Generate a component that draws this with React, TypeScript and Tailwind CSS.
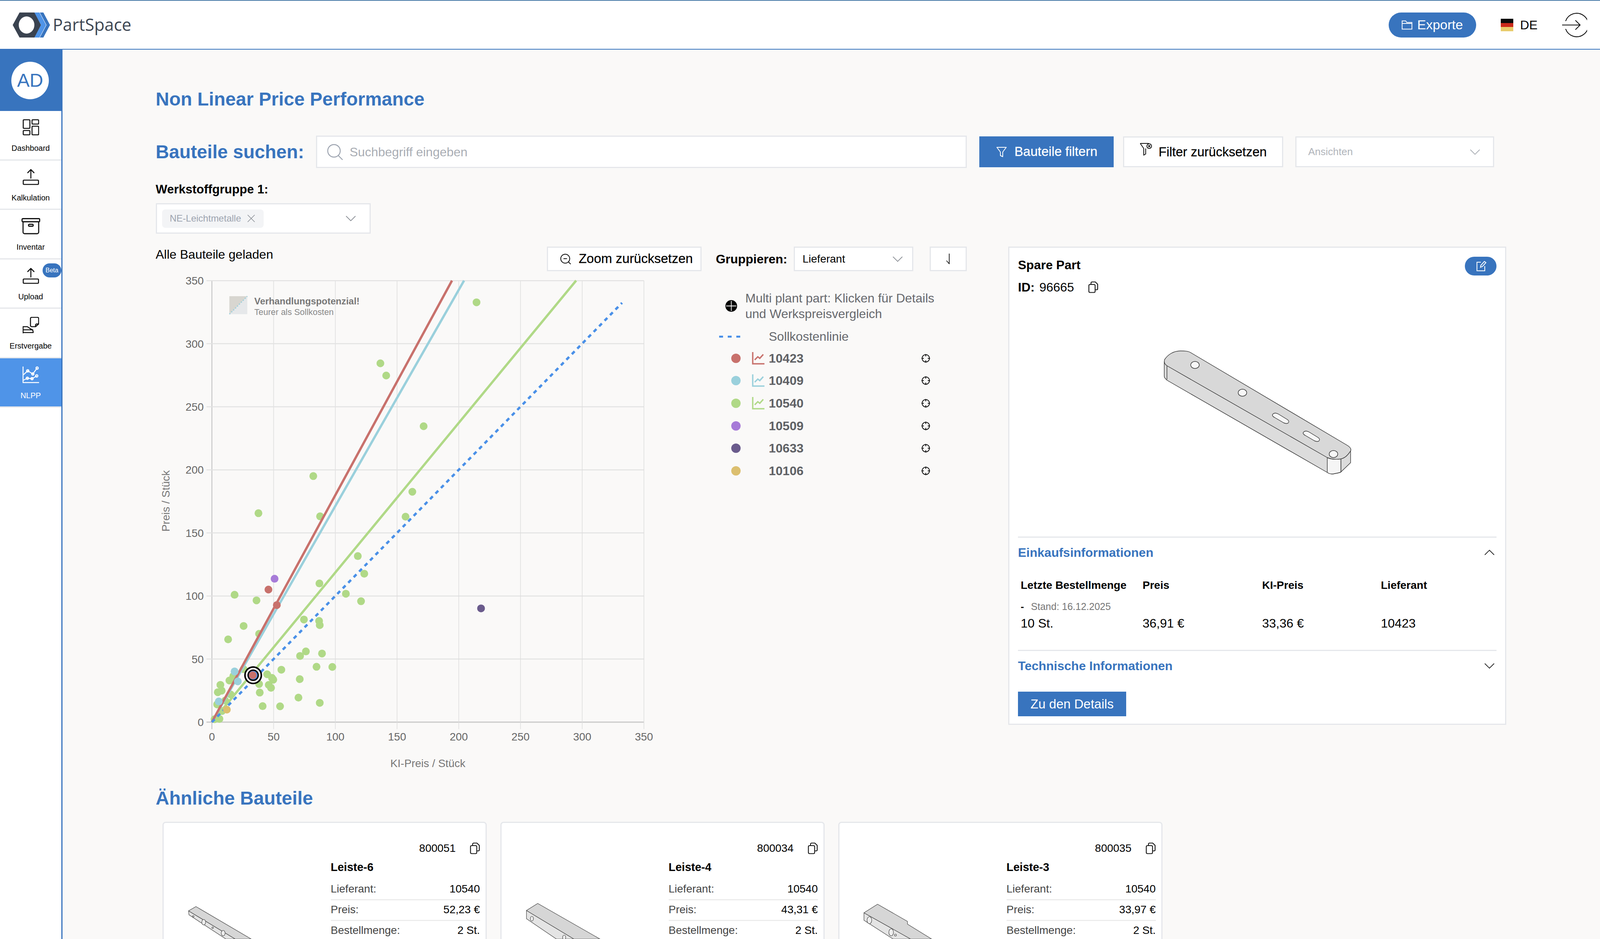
import { ReactNode } from "react";

// chart scale: 0..350 on both axes, in page pixels
const X0 = 544;
const Y0 = 1848;
const XSTEP = 158.6;
const YSTEP = 161.4;
const TICKS = [0, 1, 2, 3, 4, 5, 6, 7];

// scatter points measured off the picture
const ax = (x: number) => 400 + x * 0.829;
const ayTop = (y: number) => 680 + y * 0.446;
const ayLow = (y: number) => 1300 + y * 0.446;

const upperGreen = [
  [994, 210], [696, 560], [714, 630], [830, 921], [488, 1207], [795, 1297],
  [318, 1420], [509, 1438], [774, 1440],
];
const lowerGreen = [
  [626, 276], [646, 377], [507, 433], [244, 498], [312, 530], [589, 492], [636, 535],
  [272, 677], [459, 640], [506, 648], [508, 672], [320, 722], [224, 754], [465, 823],
  [447, 849], [515, 835], [498, 911], [547, 912], [389, 928], [345, 954], [360, 975],
  [364, 985], [228, 990], [200, 1015], [192, 1057], [204, 1048], [350, 1015], [357, 1032],
  [320, 1010], [446, 982], [322, 1059], [442, 1088], [508, 1118], [331, 1137], [385, 1138],
  [190, 1127], [232, 1070], [215, 1105], [182, 1212], [197, 1210], [240, 965], [272, 925],
  [205, 1165],
];
const others = [
  { c: "#9ad0dc", p: [[244, 938], [254, 995], [195, 1110]] },
  { c: "#dcbf6f", p: [[220, 1157]] },
  { c: "#c8716c", p: [[349, 468], [375, 557]] },
  { c: "#a77bd8", p: [[368, 406]] },
  { c: "#6a5b8c", p: [[1008, 576]] },
];

const legendRows = [
  { id: "10423", c: "#c8716c", line: true },
  { id: "10409", c: "#9ad0dc", line: true },
  { id: "10540", c: "#b0d987", line: true },
  { id: "10509", c: "#a77bd8", line: false },
  { id: "10633", c: "#6a5b8c", line: false },
  { id: "10106", c: "#dcbf6f", line: false },
];

function Chevron({ up = false, color = "#8b8f96" }: { up?: boolean; color?: string }) {
  return (
    <svg width="26" height="14" viewBox="0 0 26 14" fill="none" stroke={color} strokeWidth="1.8">
      <path d={up ? "M1 13 13 1 25 13" : "M1 1 13 13 25 1"} />
    </svg>
  );
}

function CopyIcon() {
  return (
    <svg width="26" height="30" viewBox="0 0 26 30" fill="none" stroke="#111" strokeWidth="2.2" strokeLinejoin="round">
      <rect x="1.5" y="8" width="16" height="20.5" rx="3" />
      <path d="M7 8V4a2.5 2.5 0 0 1 2.5-2.5H18l6 6V19a2.5 2.5 0 0 1-2.5 2.5h-4" />
    </svg>
  );
}

function NavItem({ label, icon, active, beta }: { label: string; icon: ReactNode; active?: boolean; beta?: boolean }) {
  return (
    <div
      className={`relative flex h-[126.5px] flex-col items-center border-b-3 border-[#e5e7eb] pt-[19px] ${
        active ? "bg-[#4f94e8] text-white" : "text-black"
      }`}
    >
      <div className="flex h-[46px] items-center justify-center">{icon}</div>
      <div className="mt-[17px] text-[20px] leading-[26px]">{label}</div>
      {beta && (
        <div className="absolute right-0 top-[10px] flex h-[36px] w-[48px] items-center justify-center rounded-full bg-[#3874be] text-[16px] text-white">
          Beta
        </div>
      )}
    </div>
  );
}

const UploadIcon = (
  <svg width="42" height="42" viewBox="0 0 42 42" fill="none" stroke="#111" strokeWidth="2.6" strokeLinecap="round" strokeLinejoin="round">
    <path d="M21 24V2M13 10l8-8 8 8" />
    <rect x="1.5" y="29" width="39" height="11" rx="2" />
  </svg>
);

function Sidebar() {
  return (
    <aside className="w-[160px] flex-none border-r-3 border-[#3874be] bg-white">
      <div className="flex h-[157px] items-center justify-center bg-[#3874be] pr-[3px]">
        <div className="flex h-[96px] w-[96px] items-center justify-center rounded-full bg-white text-[48px] text-[#3874be]">
          AD
        </div>
      </div>
      <NavItem
        label="Dashboard"
        icon={
          <svg width="42" height="42" viewBox="0 0 42 42" fill="none" stroke="#111" strokeWidth="2.6" strokeLinejoin="round">
            <rect x="1.5" y="1.5" width="17" height="22" rx="2" />
            <rect x="24" y="1.5" width="17" height="11" rx="2" />
            <rect x="1.5" y="29" width="17" height="11" rx="2" />
            <rect x="24" y="18" width="17" height="22" rx="2" />
          </svg>
        }
      />
      <NavItem label="Kalkulation" icon={UploadIcon} />
      <NavItem
        label="Inventar"
        icon={
          <svg width="48" height="42" viewBox="0 0 48 42" fill="none" stroke="#111" strokeWidth="2.8" strokeLinecap="round" strokeLinejoin="round">
            <rect x="1.5" y="1.5" width="45" height="8" rx="2" />
            <path d="M4 10v26a4 4 0 0 0 4 4h32a4 4 0 0 0 4-4V10" />
            <rect x="18" y="16" width="12" height="5" rx="2.5" />
          </svg>
        }
      />
      <NavItem label="Upload" beta icon={UploadIcon} />
      <NavItem
        label="Erstvergabe"
        icon={
          <svg width="42" height="42" viewBox="0 0 42 42" fill="none" stroke="#111" strokeWidth="2.6" strokeLinejoin="round">
            <path d="M20 4a3 3 0 0 1 3-3h15a3 3 0 0 1 3 3v14l-8 7H23a3 3 0 0 1-3-3z" />
            <path d="M41 18h-5a3 3 0 0 0-3 3v4" />
            <path d="M1 41V25h11l9 6c4 2 6 3 6 9H1zM1 33h26" />
          </svg>
        }
      />
      <NavItem
        label="NLPP"
        active
        icon={
          <svg width="44" height="44" viewBox="0 0 44 44" fill="none" stroke="#fff" strokeWidth="2.4">
            <path d="M2 1v41h41" />
            <path d="M3 22 14 12l13 8 11-15M3 36l10-5 12 1 12-7" />
            <circle cx="14" cy="12" r="3" />
            <circle cx="27" cy="20" r="3" />
            <circle cx="38" cy="5" r="3" />
            <circle cx="13" cy="31" r="3" />
            <circle cx="25" cy="32" r="3" />
            <circle cx="37" cy="25" r="3" />
          </svg>
        }
      />
    </aside>
  );
}

function Header() {
  return (
    <header className="flex h-[127px] flex-none items-center border-y-2 border-t-[#4a7ba8] border-b-[#3874be] bg-white pl-[32px] pr-[33px]">
      <svg width="100" height="66" viewBox="32 28 100 66">
        <path d="M32.500 61 50 29h39l16 32-16 32H50z" fill="#3a4350" />
        <ellipse cx="68" cy="61" rx="20" ry="22" fill="#fff" />
        <path d="M88 29h13l17 32-17 32H88l17-32z" fill="#4f94e8" />
        <path d="M102 29h9l17 32-17 32h-9l17-32z" fill="#3874be" />
      </svg>
      <div className="ml-[3px] font-['Open_Sans'] text-[43px] text-[#3d4652]">PartSpace</div>
      <div className="ml-auto flex h-[64px] w-[224px] items-center justify-center gap-[12px] rounded-full bg-[#3874be] text-[34px] text-white">
        <svg width="28" height="24" viewBox="0 0 28 24" fill="none" stroke="#fff" strokeWidth="2">
          <path d="M1.500 22.500V1.500h9l3 4h13v17zM1.500 8h25" />
        </svg>
        Exporte
      </div>
      <div className="ml-[63px] h-[32px] w-[32px] bg-[linear-gradient(#0b0b0b_33%,#c9291b_33%,#c9291b_66%,#e8cc6c_66%)]" />
      <div className="ml-[18px] text-[32px] text-black">DE</div>
      <svg className="ml-[63px]" width="64" height="64" viewBox="0 0 64 64" fill="none" stroke="#111" strokeWidth="2.2">
        <path d="M9 22A30 30 0 1 1 9 42" />
        <path d="M0 32h46M34 20l12 12-12 12" />
      </svg>
    </header>
  );
}

function SearchRow() {
  return (
    <div className="mt-[65px] flex h-[83px] items-center">
      <h2 className="w-[410.5px] flex-none text-[47.5px] font-bold text-[#3874be]">Bauteile suchen:</h2>
      <div className="flex h-[83px] w-[1666px] flex-none items-center border-3 border-[#e5e7eb] bg-white pl-[25px]">
        <svg width="42" height="42" viewBox="0 0 42 42" fill="none" stroke="#9ca3af" strokeWidth="2.4">
          <circle cx="18" cy="18" r="16" />
          <path d="m29 30 11 11" />
        </svg>
        <input
          className="ml-[16px] flex-1 bg-transparent text-[32px] outline-none placeholder:text-[#a9adb4]"
          placeholder="Suchbegriff eingeben"
        />
      </div>
      <button className="ml-[32px] flex h-[79px] w-[344px] flex-none items-center gap-[20px] bg-[#3874be] pl-[44px] text-[33.500px] text-white [-webkit-text-stroke:0.3px]">
        <svg width="26" height="26" viewBox="0 0 26 26" fill="none" stroke="#fff" strokeWidth="2" strokeLinejoin="round">
          <path d="M1 1h24l-9 12v12l-6-3v-9z" />
        </svg>
        Bauteile filtern
      </button>
      <button className="ml-[24px] flex h-[79px] w-[410px] flex-none items-center gap-[16px] border-3 border-[#e5e7eb] bg-white pl-[40px] text-[33px] text-black [-webkit-text-stroke:0.3px]">
        <svg className="-mt-[14px]" width="32" height="32" viewBox="0 0 32 32" fill="none" stroke="#111" strokeWidth="2">
          <path d="M1 1h22M1 1l9 13v17l5-3V14" />
          <circle cx="24" cy="8" r="6" />
          <path d="m21.500 5.500 5 5M26.500 5.500l-5 5" />
        </svg>
        Filter zurücksetzen
      </button>
      <div className="ml-[31px] flex h-[79px] w-[509px] flex-none items-center justify-between border-3 border-[#e5e7eb] bg-white pl-[30px] pr-[33px] text-[26px] text-[#b0b4ba]">
        Ansichten
        <Chevron color="#a9adb4" />
      </div>
    </div>
  );
}

function Toolbar() {
  return (
    <div className="flex h-[63px] items-start justify-between">
      <div className="text-[32px] leading-[40px] text-black">Alle Bauteile geladen</div>
      <div className="flex items-center">
        <button className="flex h-[63px] w-[396px] items-center gap-[19px] border-3 border-[#e5e7eb] bg-white pl-[31px] text-[33.500px] text-black [-webkit-text-stroke:0.3px]">
          <svg width="28" height="28" viewBox="0 0 28 28" fill="none" stroke="#111" strokeWidth="2">
            <circle cx="13" cy="13" r="11.500" />
            <path d="m21 21 6 6M8.500 13h9" />
          </svg>
          Zoom zurücksetzen
        </button>
        <div className="ml-[36px] text-[32px] font-bold text-black">Gruppieren:</div>
        <div className="ml-[16px] flex h-[63px] w-[306px] items-center justify-between border-3 border-[#e5e7eb] bg-white pl-[20px] pr-[24px] text-[28px] text-black">
          Lieferant
          <Chevron />
        </div>
        <div className="ml-[42px] flex h-[63px] w-[95px] items-center justify-center border-3 border-[#e5e7eb] bg-white">
          <svg width="12" height="27" viewBox="0 0 12 27" fill="none" stroke="#111" strokeWidth="1.8">
            <path d="M9 0v26L2 18" />
          </svg>
        </div>
      </div>
    </div>
  );
}

function Chart() {
  return (
    <svg
      className="mt-[6px] flex-none"
      width="1315"
      height="1290"
      viewBox="400 700 1320 1290"
      preserveAspectRatio="none"
      fontFamily="Liberation Sans"
    >
      {TICKS.map((t) => (
        <g key={t}>
          <line x1={X0 + t * XSTEP} x2={X0 + t * XSTEP} y1={718} y2={1866} stroke={t === 0 ? "#c9c9c9" : "#dcdcdc"} strokeWidth={t === 0 ? 2.500 : 1.500} />
          <line x1={530} x2={1654} y1={Y0 - t * YSTEP} y2={Y0 - t * YSTEP} stroke={t === 0 ? "#c9c9c9" : "#e2e2e2"} strokeWidth={t === 0 ? 3 : 2.500} />
          <text x={523} y={Y0 - t * YSTEP + 10} textAnchor="end" fontSize="28" fill="#666">
            {t * 50}
          </text>
          <text x={X0 + t * XSTEP} y={1895} textAnchor="middle" fontSize="28" fill="#666">
            {t * 50}
          </text>
        </g>
      ))}

      <text x={1099} y={1963} textAnchor="middle" fontSize="28" fill="#777">KI-Preis / Stück</text>
      <text transform="translate(435 1282) rotate(-90)" textAnchor="middle" fontSize="28" fill="#777">Preis / Stück</text>

      {/* hint box in the corner */}
      <rect x="589" y="758" width="46" height="46" fill="#e6e8ea" />
      <polygon points="589,758 635,758 589,804" fill="#d8d6d0" />
      <line x1="589" y1="804" x2="635" y2="758" stroke="#9ad0dc" strokeWidth="3" strokeDasharray="3 4" />
      <text x="653" y="779" fontSize="24" fontWeight="700" fill="#777">Verhandlungspotenzial!</text>
      <text x="653" y="806" fontSize="22" fill="#888">Teurer als Sollkosten</text>

      {upperGreen.map(([x, y], i) => (
        <circle key={i} cx={ax(x)} cy={ayTop(y)} r="10" fill="#b0d987" />
      ))}
      {lowerGreen.map(([x, y], i) => (
        <circle key={i} cx={ax(x)} cy={ayLow(y)} r="10" fill="#b0d987" />
      ))}

      <line x1={X0} y1={Y0} x2="1480" y2="718" stroke="#b0d987" strokeWidth="6" />
      <line x1={X0} y1={Y0} x2="1192" y2="718" stroke="#9ad0dc" strokeWidth="6" />
      <line x1={X0} y1={Y0} x2="1161" y2="718" stroke="#c8716c" strokeWidth="6" />
      <line x1={X0} y1={Y0} x2="1598" y2="775" stroke="#4a90e8" strokeWidth="6" strokeDasharray="10 10" />

      {others.map((s) =>
        s.p.map(([x, y], i) => <circle key={s.c + i} cx={ax(x)} cy={ayLow(y)} r="10" fill={s.c} />)
      )}

      {/* selected part */}
      <circle cx="650" cy="1728" r="21" fill="#fff" stroke="#000" strokeWidth="4" />
      <circle cx="650" cy="1728" r="13" fill="#4a90e8" stroke="#000" strokeWidth="3.500" />
      <circle cx="649" cy="1728" r="10" fill="#c8716c" />
    </svg>
  );
}

function Crosshair() {
  return (
    <svg width="22" height="22" viewBox="0 0 22 22" fill="none" stroke="#111" strokeWidth="2">
      <circle cx="11" cy="11" r="9.500" />
      <path d="M11 0v6M11 16v6M0 11h6M16 11h6" />
    </svg>
  );
}

function Legend() {
  return (
    <div className="ml-[127.5px] mt-[49px] w-[560px] flex-none text-[32px] text-[#66686d]">
      <div className="flex items-center">
        <svg className="ml-[16px] flex-none" width="30" height="30" viewBox="0 0 30 30">
          <circle cx="15" cy="15" r="15" fill="#000" />
          <path d="M15 2v26M2 15h26" stroke="#fff" strokeWidth="1.800" />
        </svg>
        <div className="ml-[21px] w-[520px] leading-[40px]">Multi plant part: Klicken für Details und Werkspreisvergleich</div>
      </div>
      <div className="mt-[18px] flex h-[40px] items-center">
        <svg className="flex-none" width="54" height="5" viewBox="0 0 54 5">
          <line x1="0" y1="2.500" x2="54" y2="2.500" stroke="#4a90e8" strokeWidth="5" strokeDasharray="10 12" />
        </svg>
        <div className="ml-[73px]">Sollkostenlinie</div>
      </div>
      <div className="mt-[7px]">
        {legendRows.map((r) => (
          <div key={r.id} className="flex h-[57.600px] items-center">
            <div className="ml-[31px] h-[24px] w-[24px] flex-none rounded-full" style={{ backgroundColor: r.c }} />
            <div className="ml-[29px] w-[43px] flex-none">
              {r.line && (
                <svg width="32" height="32" viewBox="0 0 32 32" fill="none" stroke={r.c} strokeWidth="3.5">
                  <path d="M2 0v30h30M7 20l8-8 5 4 9-10" />
                </svg>
              )}
            </div>
            <div className="w-[391px] flex-none font-bold text-[#5f6165]">{r.id}</div>
            <Crosshair />
          </div>
        ))}
      </div>
    </div>
  );
}

function PartDrawing() {
  return (
    <svg
      className="flex-none"
      width="1225"
      height="618"
      viewBox="2616 755 1230 618"
      preserveAspectRatio="none"
      stroke="#333"
      strokeWidth="1.400"
      strokeLinejoin="round"
    >
      <path d="M2992 925v38c0 4 3 6 7 10l412 236c6 4 12 5 19 3 6-1 12-2 16-4l25-24v-32l-38 22z" fill="#dcdcdc" />
      <path d="M3411 1171v38c6 4 12 5 19 3 6-1 12-2 16-4v-34c-12 2-24 2-35-3z" fill="#f5f5f5" />
      <path d="M3034 898c10 0 20 0 27 5l402 237c8 5 10 10 8 14-8 12-16 20-29 21-12 1-22 0-31-4L2999 936c-6-4-8-10-6-16 8-12 22-22 41-22z" fill="#d8d8d8" />
      <path d="M2999 936v35M3446 1175v33" fill="none" />
      {[[3071, 934], [3193, 1005], [3427, 1162]].map(([x, y]) => (
        <ellipse key={x} cx={x} cy={y} rx="11" ry="9" fill="#f7f7f7" />
      ))}
      <path d="M3272 1059c3-3 9-2 14 1l23 14c4 3 4 7 1 9-3 1-7 1-11-1l-24-14c-6-3-6-7-3-9z" fill="#f7f7f7" />
      <path d="M3351 1105c3-3 9-2 14 1l23 14c4 3 4 7 1 9-3 1-7 1-11-1l-24-14c-6-3-6-7-3-9z" fill="#f7f7f7" />
    </svg>
  );
}

function DetailPanel() {
  return (
    <section className="h-[1224px] w-[1275px] flex-none border-3 border-[#e5e7eb] bg-white px-[22px] pt-[23px]">
      <div className="flex h-[48px] items-start justify-between">
        <div className="text-[32px] font-bold leading-[42px] text-black">Spare Part</div>
        <div className="flex h-[48px] w-[81px] items-center justify-center rounded-full bg-[#3874be]">
          <svg width="28" height="26" viewBox="0 0 28 26" fill="none" stroke="#fff" strokeWidth="2">
            <path d="M14 3H4v22h20V13" />
            <path d="m13 16 1-5 9-10 4 3-9 10z" />
          </svg>
        </div>
      </div>
      <div className="mt-[10px] flex h-[40px] items-center text-[32px] text-black">
        <span className="font-bold">ID:</span>
        <span className="ml-[12px]">96665</span>
        <div className="ml-[36px] flex">
          <CopyIcon />
        </div>
      </div>
      <PartDrawing />
      <div className="border-t-3 border-[#e5e7eb]">
        <div className="flex h-[76px] items-center justify-between pr-[5px] text-[32px] font-bold text-[#3874be]">
          Einkaufsinformationen
          <Chevron up color="#222" />
        </div>
        <div className="mt-[26px] grid grid-cols-[312px_306px_304px_1fr] pl-[7px] text-black">
          <div className="text-[28px] font-bold leading-[40px]">Letzte Bestellmenge</div>
          <div className="text-[28px] font-bold leading-[40px]">Preis</div>
          <div className="text-[28px] font-bold leading-[40px]">KI-Preis</div>
          <div className="text-[28px] font-bold leading-[40px]">Lieferant</div>
          <div className="col-span-4 mt-[20px] flex h-[30px] items-center text-[25px] text-[#777]">
            <span className="mr-[18px] font-bold text-black">-</span>
            Stand: 16.12.2025
          </div>
          <div className="mt-[7px] text-[32px] leading-[40px]">10 St.</div>
          <div className="mt-[7px] text-[32px] leading-[40px]">36,91 €</div>
          <div className="mt-[7px] text-[32px] leading-[40px]">33,36 €</div>
          <div className="mt-[7px] text-[32px] leading-[40px]">10423</div>
        </div>
      </div>
      <div className="mt-[48px] border-t-3 border-[#e5e7eb]">
        <div className="flex h-[76px] items-center justify-between pr-[5px] text-[32px] font-bold text-[#3874be]">
          Technische Informationen
          <Chevron color="#222" />
        </div>
      </div>
      <button className="mt-[28px] h-[63px] w-[277px] bg-[#3874be] text-[33px] text-white">Zu den Details</button>
    </section>
  );
}

function Thumb({ left, children }: { left: number; children: ReactNode }) {
  return (
    <svg
      className="mt-[197px] flex-none"
      width="428"
      height="100"
      viewBox={`${left} 2303 430 100`}
      preserveAspectRatio="none"
      stroke="#444"
      strokeWidth="1.200"
      strokeLinejoin="round"
    >
      {children}
    </svg>
  );
}

function SimilarCard({ id, name, price, thumb }: { id: string; name: string; price: string; thumb: ReactNode }) {
  const rows = [
    ["Lieferant:", "10540"],
    ["Preis:", price],
    ["Bestellmenge:", "2 St."],
  ];
  return (
    <article className="flex h-[400px] w-[830px] flex-none rounded-lg border-3 border-[#e5e7eb] bg-white">
      {thumb}
      <div className="w-[382px] flex-none pt-[47px] text-[28px]">
        <div className="flex h-[36px] items-center justify-end gap-[36px] text-black">
          {id}
          <div className="flex">
            <CopyIcon />
          </div>
        </div>
        <div className="mt-[12px] h-[36px] text-[29px] font-bold leading-[36px] text-black">{name}</div>
        <div className="mt-[14px]">
          {rows.map(([label, value]) => (
            <div key={label} className="flex h-[53px] items-center justify-between border-b-3 border-[#ececec] pb-[3px]">
              <span className="text-[#444]">{label}</span>
              <span className="text-black">{value}</span>
            </div>
          ))}
        </div>
      </div>
    </article>
  );
}

export default function App() {
  return (
    <div className="flex h-[2403px] flex-col overflow-hidden bg-[#faf9f8] font-['Liberation_Sans',sans-serif]">
      <Header />
      <div className="flex flex-1">
        <Sidebar />
        <main className="flex-1 pl-[238.5px] pt-[99px]">
          <h1 className="h-[56px] text-[48px] font-bold leading-[56px] text-[#3874be]">Non Linear Price Performance</h1>
          <SearchRow />

          <div className="mt-[34px] text-[31.5px] font-bold leading-[40px] text-black">Werkstoffgruppe 1:</div>
          <div className="mt-[16px] flex h-[78px] w-[550px] items-center justify-between border-3 border-[#e5e7eb] bg-white pl-[13px] pr-[35px]">
            <div className="flex h-[47px] w-[260px] items-center gap-[16px] rounded-lg bg-[#f3f4f6] pl-[20px] text-[24px] text-[#9ca3af]">
              NE-Leichtmetalle
              <svg width="20" height="20" viewBox="0 0 20 20" stroke="#8b8f96" strokeWidth="1.600">
                <path d="m1 1 18 18M19 1 1 19" />
              </svg>
            </div>
            <Chevron />
          </div>

          <div className="mt-[33px] flex h-[1359px] items-start gap-[106.5px]">
            <div className="w-[2076px] flex-none">
              <Toolbar />
              <div className="flex">
                <Chart />
                <Legend />
              </div>
            </div>
            <DetailPanel />
          </div>

          <h2 className="mt-[25px] h-[56px] text-[48px] font-bold leading-[56px] text-[#3874be]">Ähnliche Bauteile</h2>
          <div className="ml-[17px] mt-[32px] flex gap-[35px]">
            <SimilarCard
              id="800051"
              name="Leiste-6"
              price="52,23 €"
              thumb={
                <Thumb left={420}>
                  <polygon points="484,2331 485,2341 580,2403 604,2403" fill="#e4e4e4" />
                  <polygon points="503,2320 645,2403 604,2403 484,2331" fill="#d6d6d6" />
                  <ellipse cx="523" cy="2360" rx="5" ry="7" fill="#eee" />
                  <ellipse cx="573" cy="2388" rx="5" ry="7" fill="#eee" />
                  <circle cx="496" cy="2345" r="2" fill="#eee" />
                  <circle cx="546" cy="2374" r="2" fill="#eee" />
                </Thumb>
              }
            />
            <SimilarCard
              id="800034"
              name="Leiste-4"
              price="43,31 €"
              thumb={
                <Thumb left={1288}>
                  <polygon points="1352,2330 1352,2351 1429,2403 1474,2403" fill="#e4e4e4" />
                  <polygon points="1381,2312 1541,2403 1474,2403 1352,2330" fill="#d6d6d6" />
                  <ellipse cx="1366" cy="2351" rx="4" ry="6" fill="#eee" />
                  <ellipse cx="1449" cy="2399" rx="4" ry="6" fill="#eee" />
                </Thumb>
              }
            />
            <SimilarCard
              id="800035"
              name="Leiste-3"
              price="33,97 €"
              thumb={
                <Thumb left={2156}>
                  <polygon points="2219,2336 2219,2355 2294,2403 2339,2403" fill="#e4e4e4" />
                  <polygon points="2254,2314 2331,2358 2331,2365 2393,2403 2339,2403 2219,2336" fill="#d6d6d6" />
                  <ellipse cx="2233" cy="2355" rx="6" ry="9" fill="#eee" />
                  <ellipse cx="2289" cy="2386" rx="6" ry="9" fill="#eee" />
                  <circle cx="2300" cy="2393" r="2.500" fill="#eee" />
                </Thumb>
              }
            />
          </div>
        </main>
      </div>
    </div>
  );
}
